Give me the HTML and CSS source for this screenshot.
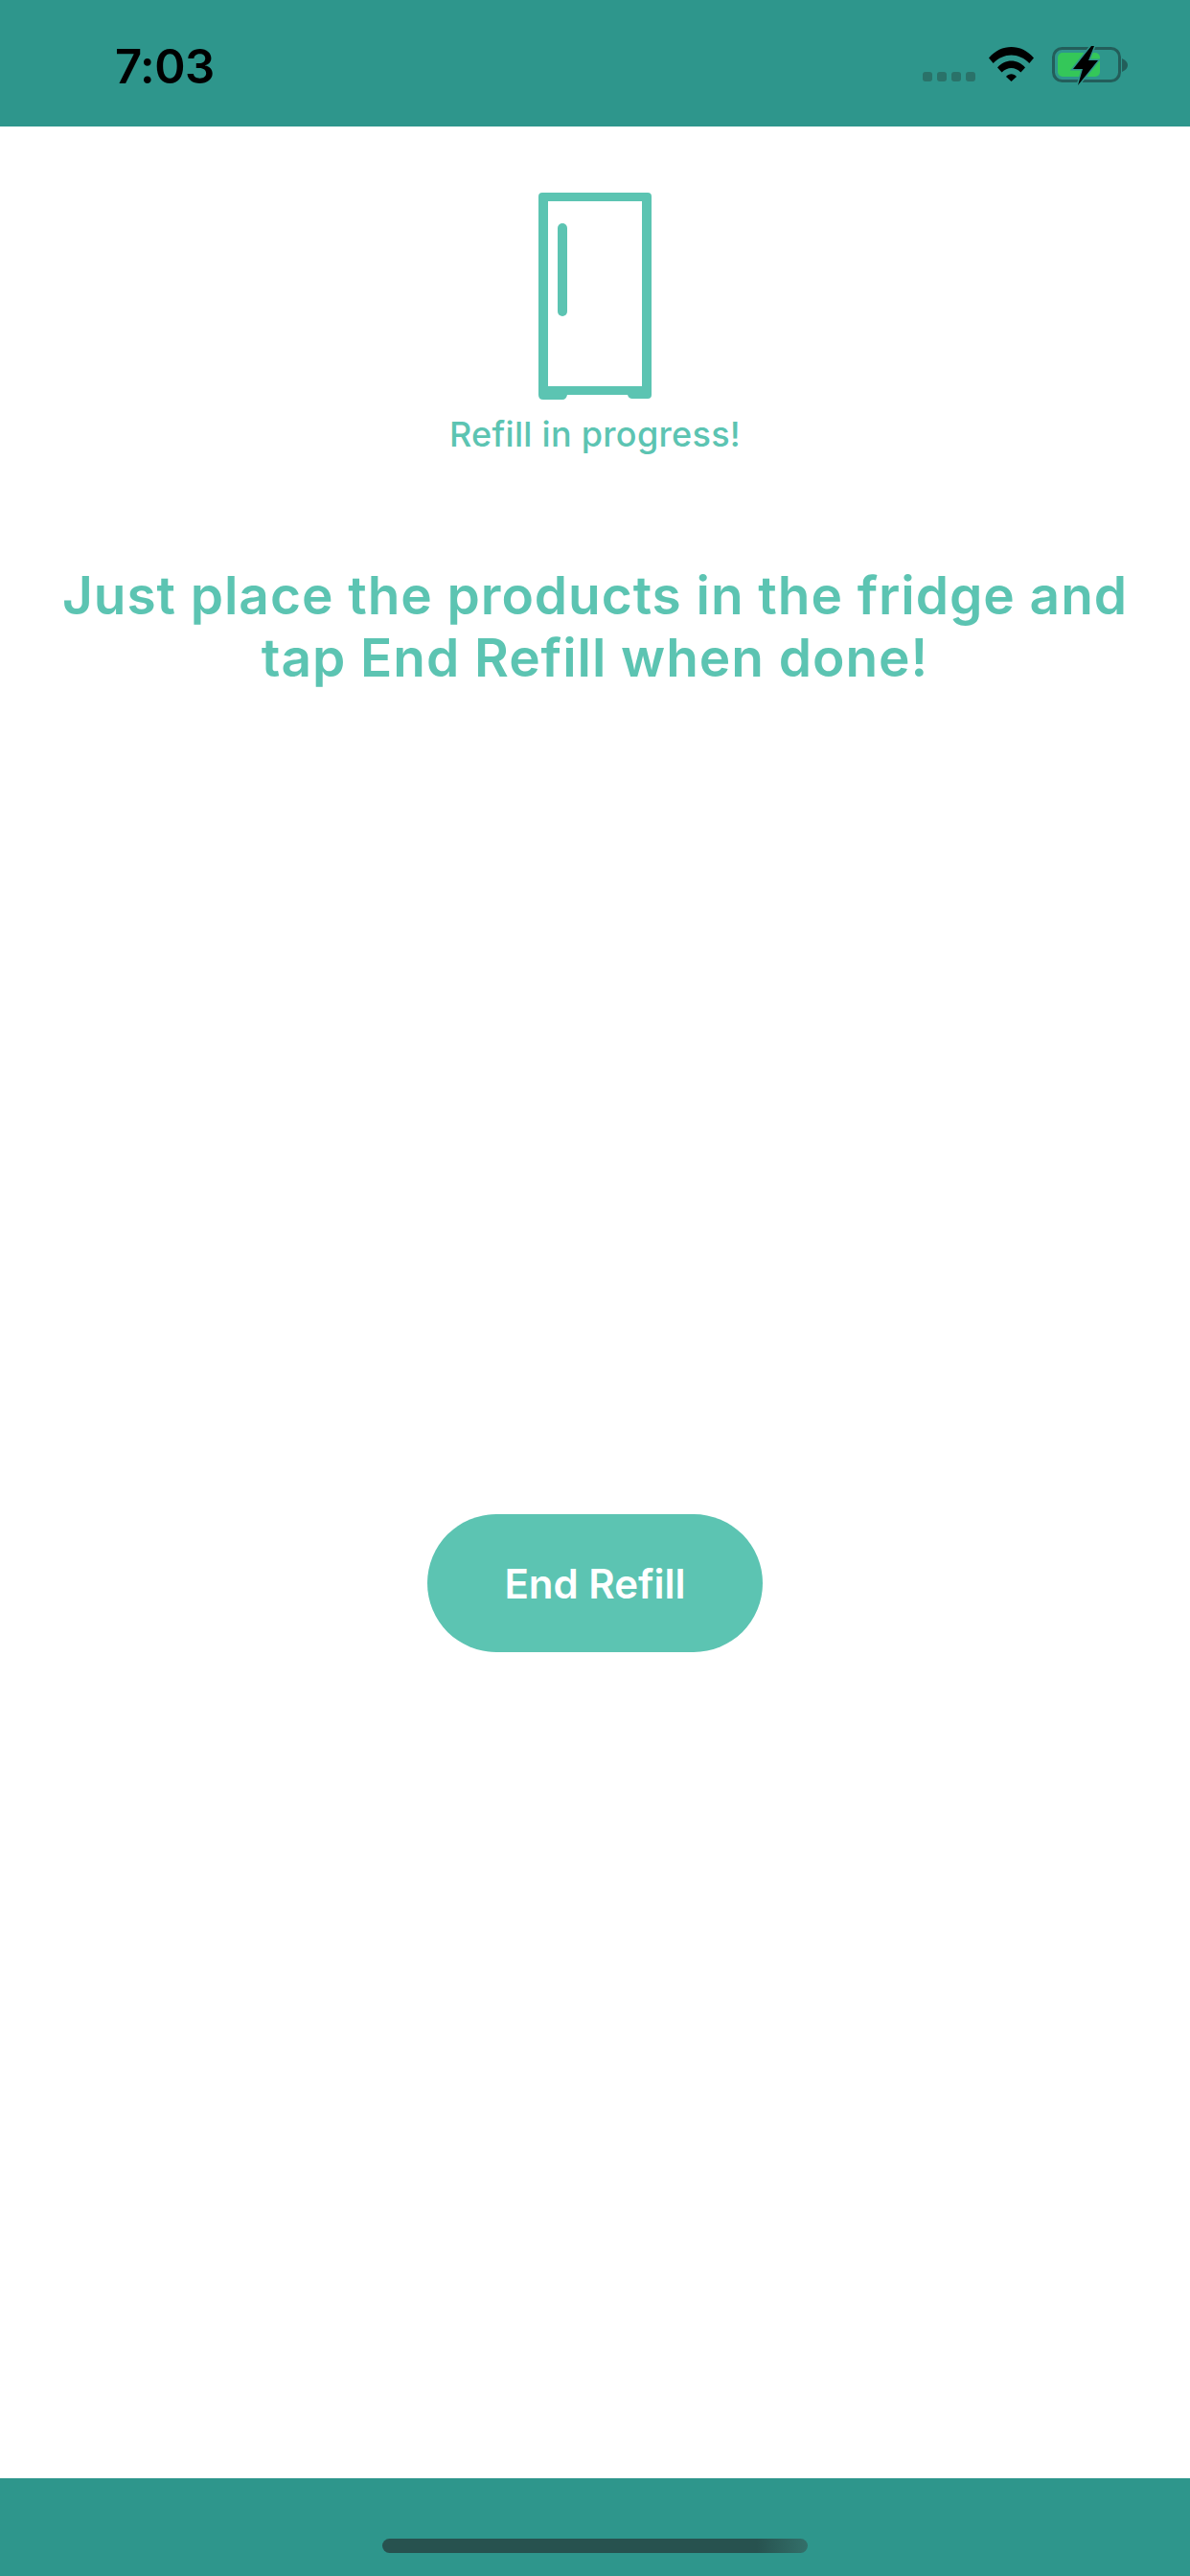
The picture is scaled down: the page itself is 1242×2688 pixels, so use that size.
FILE: index.html
```html
<!DOCTYPE html>
<html lang="en">
	<head>
		<meta charset="UTF-8">
		<meta name="viewport" content="width=device-width, initial-scale=1.0">
		<title>Refill in progress</title>
		<link rel="stylesheet" href="styles.css">
	</head>
	<body>
		<!-- Status bar -->
		<header class="status-bar">
			<div class="clock">7:03</div>
			<div class="status-icons">
				<div class="signal-dots">
					<span></span><span></span><span></span><span></span>
				</div>
				<svg class="wifi" width="47" height="36" viewBox="0 0 47 36">
					<path d="M0 11.5 C13 -3.8 34 -3.8 47 11.5 L42.3 17 C31.5 5.5 15.5 5.5 4.7 17 Z" fill="#000"/>
					<path d="M9 21.5 C17 12.3 30 12.3 38 21.5 L33.4 26.6 C27.5 20.4 19.5 20.4 13.6 26.6 Z" fill="#000"/>
					<path d="M18 31 C21 27.4 26 27.4 29 31 L23.5 36 Z" fill="#000"/>
				</svg>
				<svg class="battery" width="80" height="38" viewBox="0 0 80 38">
					<rect x="1.5" y="1.5" width="69" height="34" rx="9" fill="none" stroke="#235e5a" stroke-width="3"/>
					<path d="M73 12 C77 14 79 16 79 19 C79 22 77 24 73 26 Z" fill="#235e5a"/>
					<rect x="6" y="6" width="44" height="25" rx="5" fill="#34c759"/>
					<path d="M41 -1 L22 23 L32 23 L27 40 L48 14 L38 14 L44 -1 Z" fill="#000" stroke="#2e968c" stroke-width="3" stroke-linejoin="miter" paint-order="stroke"/>
				</svg>
			</div>
		</header>

		<main class="content">
			<svg class="fridge" width="118" height="216" viewBox="0 0 118 216">
				<path fill-rule="evenodd" d="M4 0 H114 Q118 0 118 4 V211 Q118 215 114 215 H98 Q94 215 93 211 H30 Q29 216 25 216 H5 Q0 216 0 211 V4 Q0 0 4 0 Z M10 9 V202 H108 V9 Z" fill="#5cc4b2"/>
				<rect x="20" y="32" width="10" height="97" rx="5" fill="#5cc4b2"/>
			</svg>
			<p class="progress-label">Refill in progress!</p>
			<h1 class="headline">Just place the products in the fridge and<br>tap End Refill when done!</h1>
			<button class="end-button">End Refill</button>
		</main>

		<footer class="bottom-bar">
			<div class="home-indicator"></div>
		</footer>
	</body>
</html>
```

FILE: styles.css
```css
body {
	display: flex;
	flex-direction: column;
	height: 2688px;
	margin: 0;
	background: #fff;
	font-family: 'Inter', 'Liberation Sans', sans-serif;
	overflow: hidden;
}

.status-bar {
	display: flex;
	justify-content: space-between;
	align-items: flex-start;
	height: 132px;
	padding: 0 64px 0 120px;
	box-sizing: border-box;
	background: #2e968c;
}

.clock {
	margin-top: 40px;
	font-size: 49px;
	line-height: 60px;
	font-weight: 600;
	letter-spacing: -0.5px;
	color: #000;
}

.status-icons {
	display: flex;
	align-items: flex-start;
	margin-top: 49px;
}

.signal-dots {
	display: flex;
	gap: 5px;
	margin-top: 26px;
}

.signal-dots span {
	width: 10px;
	height: 10px;
	border-radius: 3px;
	background: #2a7269;
}

.wifi {
	margin-left: 14px;
}

.battery {
	margin-left: 19px;
	overflow: visible;
}

.content {
	display: flex;
	flex-direction: column;
	align-items: center;
	flex: 1;
	padding-top: 69px;
	color: #5cc4b2;
}

.fridge {
	display: block;
}

.progress-label {
	margin: 14px 0 0;
	font-size: 36px;
	line-height: 44px;
	font-weight: 500;
	letter-spacing: 0.3px;
	white-space: nowrap;
}

.headline {
	margin: 114px 0 0;
	font-size: 55px;
	line-height: 65px;
	font-weight: 600;
	letter-spacing: 0.95px;
	text-align: center;
	white-space: nowrap;
}

.end-button {
	width: 350px;
	height: 144px;
	margin-top: 861px;
	border: 0;
	border-radius: 72px;
	background: #5cc4b2;
	color: #fff;
	font-family: inherit;
	font-size: 42px;
	font-weight: 600;
}

.bottom-bar {
	display: flex;
	justify-content: center;
	height: 102px;
	padding-top: 63px;
	box-sizing: border-box;
	background: #2e968c;
}

.home-indicator {
	width: 444px;
	height: 15px;
	border-radius: 8px;
	background: linear-gradient(to right, #27524f 0%, #27524f 88%, #33706a 100%);
}
```
